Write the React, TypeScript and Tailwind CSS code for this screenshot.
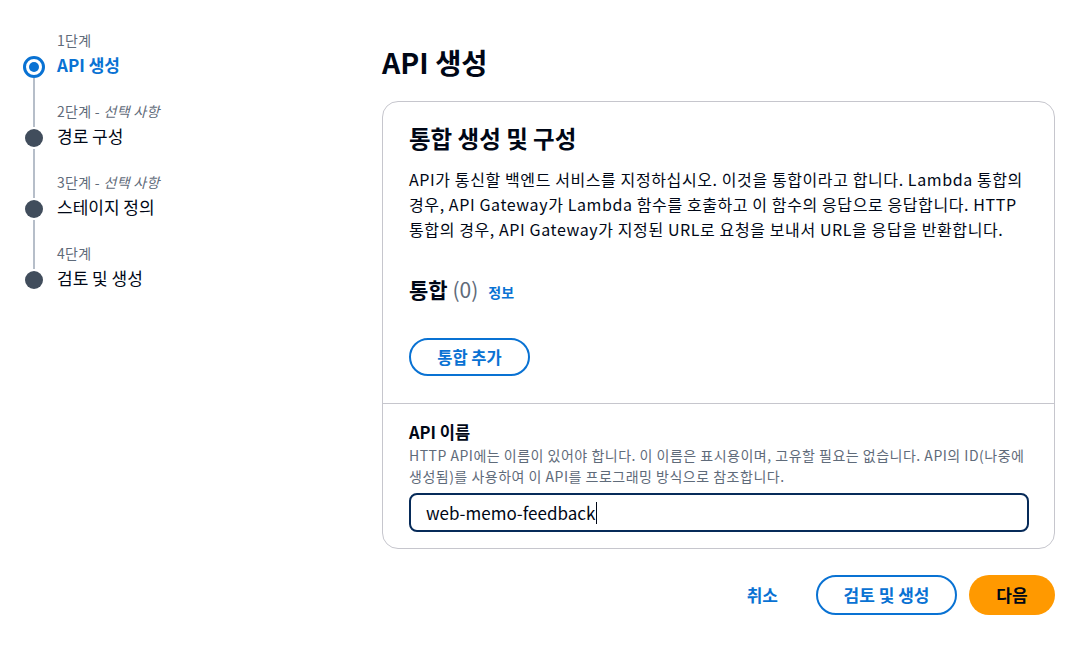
import React from "react";

const font = { fontFamily: '"Noto Sans CJK KR", "Noto Sans", sans-serif' };

const steps = [
  { label: "1단계", optional: false, title: "API 생성", active: true },
  { label: "2단계", optional: true, title: "경로 구성", active: false },
  { label: "3단계", optional: true, title: "스테이지 정의", active: false },
  { label: "4단계", optional: false, title: "검토 및 생성", active: false },
];

const Stepper = () => {
  return (
    <div className="w-[382px] shrink-0 pt-[29px] pl-[23px]">
      {steps.map((s, i) => (
        <div key={s.label} className="flex">
          <div className="flex w-[22px] flex-col items-center">
            <div className="h-[27px]">
              {i > 0 && <div className="mx-auto h-full w-[2px] bg-[#b6bec9]" />}
            </div>
            {s.active ? (
              <div className="flex h-[22px] w-[22px] items-center justify-center rounded-full border-[3px] border-[#0972d3]">
                <div className="h-[10px] w-[10px] rounded-full bg-[#0972d3]" />
              </div>
            ) : (
              <div className="my-[2px] h-[18px] w-[18px] rounded-full bg-[#414d5c]" />
            )}
            {i < steps.length - 1 && <div className="h-[22px] w-[2px] bg-[#b6bec9]" />}
          </div>
          <div className="ml-[12px]">
            <div className="h-[22px] text-[14px] leading-[22px] tracking-[0.3px] text-[#5f6b7a]">
              {s.label}
              {s.optional && <span> - <i>선택 사항</i></span>}
            </div>
            <div
              className={
                s.active
                  ? "mt-[2px] text-[17px] font-bold leading-[24px] text-[#0972d3]"
                  : "mt-[2px] text-[17px] leading-[24px] text-[#000716]"
              }
            >
              {s.title}
            </div>
          </div>
        </div>
      ))}
    </div>
  );
};

const App = () => {
  return (
    <div className="flex h-[648px] w-[1080px] bg-white text-[#000716]" style={font}>
      <Stepper />
      <div className="w-[673px] pt-[42px]">
        <h1 className="text-[28.5px] font-bold leading-[40px]">API 생성</h1>
        <div className="mt-[19px] rounded-[16px] border border-[#c6c6cd] bg-white">
          <div className="px-[26px] pt-[18px] pb-[27px]">
            <h2 className="text-[23.5px] font-bold leading-[36px]">통합 생성 및 구성</h2>
            <p className="mt-[11px] text-[16px] leading-[25px] tracking-[0.6px]">
              API가 통신할 백엔드 서비스를 지정하십시오. 이것을 통합이라고 합니다. Lambda 통합의
              <br />
              경우, API Gateway가 Lambda 함수를 호출하고 이 함수의 응답으로 응답합니다. HTTP
              <br />
              통합의 경우, API Gateway가 지정된 URL로 요청을 보내서 URL을 응답을 반환합니다.
            </p>
            <div className="mt-[32px] flex items-baseline">
              <h3 className="text-[21px] font-bold leading-[30px]">
                통합 <span className="font-normal text-[#5f6b7a]">(0)</span>
              </h3>
              <a className="ml-[10px] text-[14px] font-bold text-[#0972d3]">정보</a>
            </div>
            <button className="mt-[34px] h-[38px] w-[121px] rounded-full border-2 border-[#0972d3] text-[16.5px] font-bold text-[#0972d3]">
              통합 추가
            </button>
          </div>
          <div className="border-t border-[#c6c6cd] px-[26px] pt-[16px] pb-[16px]">
            <div className="text-[16.5px] font-bold leading-[24px]">API 이름</div>
            <p className="mt-[1px] text-[14px] leading-[21px] tracking-[0.5px] text-[#5f6b7a]">
              HTTP API에는 이름이 있어야 합니다. 이 이름은 표시용이며, 고유할 필요는 없습니다. API의 ID(나중에
              <br />
              생성됨)를 사용하여 이 API를 프로그래밍 방식으로 참조합니다.
            </p>
            <div className="mt-[6px] flex h-[39px] w-[620px] items-center rounded-[8px] border-2 border-[#072b59] px-[15px] text-[17px]">
              web-memo-feedback
              <span className="ml-[1px] h-[22px] w-[1px] bg-[#000716]" />
            </div>
          </div>
        </div>
        <div className="mt-[26px] flex items-center justify-end">
          <button className="mr-[38px] text-[17px] font-bold text-[#0972d3]">취소</button>
          <button className="h-[40px] w-[141px] rounded-full border-2 border-[#0972d3] text-[17px] font-bold text-[#0972d3]">
            검토 및 생성
          </button>
          <button className="ml-[12px] h-[40px] w-[86px] rounded-full bg-[#ff9900] text-[17px] font-bold text-[#000716]">
            다음
          </button>
        </div>
      </div>
    </div>
  );
};

export default App;
